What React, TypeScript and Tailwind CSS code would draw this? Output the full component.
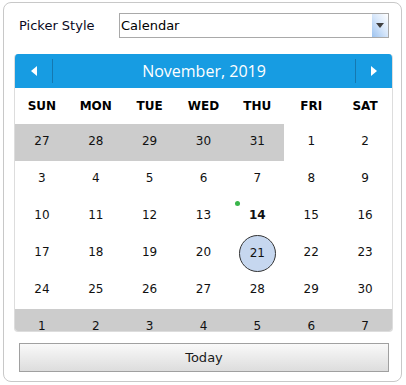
import React from "react";

const weekDays = ["SUN", "MON", "TUE", "WED", "THU", "FRI", "SAT"];

type Day = { n: number; other?: boolean };

const weeks: Day[][] = [
    [{ n: 27, other: true }, { n: 28, other: true }, { n: 29, other: true }, { n: 30, other: true }, { n: 31, other: true }, { n: 1 }, { n: 2 }],
    [3, 4, 5, 6, 7, 8, 9].map((n) => ({ n })),
    [10, 11, 12, 13, 14, 15, 16].map((n) => ({ n })),
    [17, 18, 19, 20, 21, 22, 23].map((n) => ({ n })),
    [24, 25, 26, 27, 28, 29, 30].map((n) => ({ n })),
    [1, 2, 3, 4, 5, 6, 7].map((n) => ({ n, other: true })),
];

function DayCell({ day }: { day: Day }) {
    const isToday = !day.other && day.n === 14;
    const isSelected = !day.other && day.n === 21;

    return (
        <div className={`relative h-[37px] flex items-center justify-center leading-none ${day.other ? "bg-[#cccccc]" : "bg-white"}`}>
            {isToday && <span className="absolute left-[5px] top-[3px] w-[5px] h-[5px] rounded-full bg-[#39b54a]" />}
            {isSelected ? (
                <span className="w-[37px] h-[37px] rounded-full bg-[#c6d7ef] border border-[#333333] flex items-center justify-center pb-[2px]">
                    {day.n}
                </span>
            ) : (
                <span className={`pb-[3px] ${isToday ? "font-bold" : ""}`}>{day.n}</span>
            )}
        </div>
    );
}

export default function App() {
    return (
        <div className="w-[406px] h-[385px] bg-white pt-[2px] pl-[3px] font-['DejaVu_Sans',sans-serif] text-[#111111]">
            <div className="w-[399px] h-[380px] border border-[#c8c8c8] rounded-[8px] flex flex-col">
                {/* Picker style row */}
                <div className="flex items-center pt-[10px] pl-[15px]">
                    <span className="w-[100px] text-[13px] text-[#0a0a1e]">Picker Style</span>
                    <div className="w-[270px] h-[25px] border border-[#a9a9a9] flex items-center">
                        <span className="flex-1 pl-[1px] text-[13px] text-black">Calendar</span>
                        <div className="w-[16px] h-full bg-gradient-to-bl from-[#ffffff] via-[#d6e6fa] to-[#9dc3ef] flex items-center justify-center">
                            <svg width="8" height="5" viewBox="0 0 8 5">
                                <path d="M0 0 L8 0 L4 5 Z" fill="#404040" />
                            </svg>
                        </div>
                    </div>
                </div>

                {/* Calendar */}
                <div className="mt-[16px] ml-[10px] w-[379px] h-[278px] rounded-[4px] overflow-hidden border-x border-b border-[#dddddd] flex flex-col">
                    <div className="h-[34px] shrink-0 bg-[#179ce2] flex items-center">
                        <div className="w-[37px] h-full flex items-center justify-center">
                            <svg width="6" height="10" viewBox="0 0 6 10">
                                <path d="M6 0 L6 10 L0 5 Z" fill="#ffffff" />
                            </svg>
                        </div>
                        <div className="w-px h-[24px] bg-[#1578b0]" />
                        <div className="flex-1 text-center text-white text-[16px] font-['Open_Sans',sans-serif]">November, 2019</div>
                        <div className="w-px h-[24px] bg-[#1578b0]" />
                        <div className="w-[36px] h-full flex items-center justify-center">
                            <svg width="6" height="10" viewBox="0 0 6 10">
                                <path d="M0 0 L0 10 L6 5 Z" fill="#ffffff" />
                            </svg>
                        </div>
                    </div>
                    <div className="grid grid-cols-7 h-[36px] shrink-0 items-center text-[12px] font-bold text-black">
                        {weekDays.map((d) => (
                            <div key={d} className="text-center">{d}</div>
                        ))}
                    </div>
                    <div className="grid grid-cols-7 text-[12px] text-[#111111]">
                        {weeks.flat().map((day, i) => (
                            <DayCell key={i} day={day} />
                        ))}
                    </div>
                </div>

                {/* Today button */}
                <div className="mt-[11px] ml-[15px] w-[370px] h-[29px] border border-[#a0a0a0] bg-gradient-to-b from-[#f9f9f9] to-[#dddddd] flex items-center justify-center text-[13px] text-[#1a1a1a]">
                    Today
                </div>
            </div>
        </div>
    );
}
